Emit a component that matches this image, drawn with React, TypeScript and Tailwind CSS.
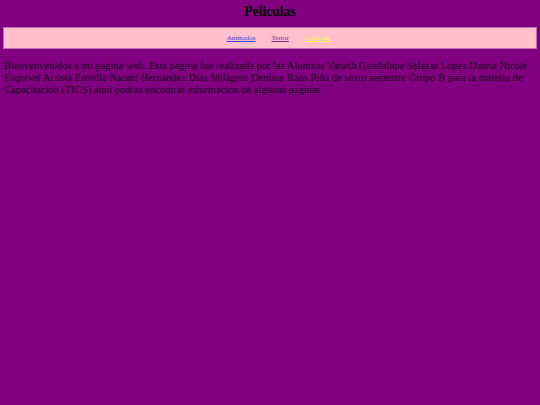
export default function App() {
  return (
    <div className="min-h-[405px] w-full bg-[#800080] text-black font-['Liberation_Serif',serif] px-[3px]">
      <h1 className="text-center font-bold text-[13.6px] leading-[15px] pt-[4px] pb-[8px]">Peliculas</h1>
      <nav className="bg-[#ffc0cb] h-[22px] flex items-center justify-center gap-[16px] pl-[17px] text-[7px] border border-[#c070b0]">
        <a href="#" className="underline text-[#3a3aee]">Animados</a>
        <a href="#" className="underline text-[#6a2a8b]">Terror</a>
        <a href="#" className="underline text-[#ffff40]">Comedia</a>
      </nav>
      <p className="text-[10.5px] leading-[12.2px] pt-[11px] pl-[1px] text-[#1a001a]">
        Bienvenvenidos a mi pagina web. Esta pagina fue realizada por las Alumnas Yaneth Guadalupe Salazar Lopez Danna Nicole Esquivel Acosta Estrella Naomi Hernandez Dias Milagros Denisse Raos Piña de sexto semestre Grupo B para la materia de Capacitacion (TICS) aqui podras encontrar informacion de algunas paginas
      </p>
    </div>
  );
}
